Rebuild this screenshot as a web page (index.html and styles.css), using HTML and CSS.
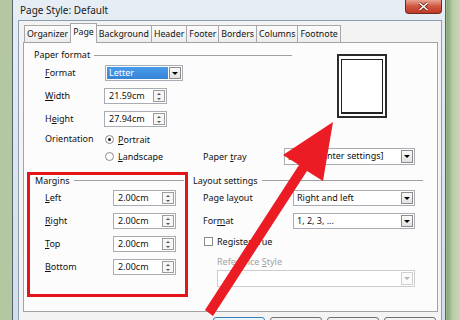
FILE: index.html
```html
<!DOCTYPE html>
<html lang="en">
<head>
  <meta charset="UTF-8" />
  <title>Page Style: Default</title>
  <link rel="stylesheet" href="styles.css">
</head>
<body>
  <div class="window">
    <div class="titlebar">
      <span class="title">Page Style: Default</span>
      <span class="close">
        <svg width="11" height="9" viewBox="0 0 11 9"><path d="M1.5 1 L9.5 8 M9.5 1 L1.5 8" stroke="#6b2118" stroke-width="3"/><path d="M1.5 1 L9.5 8 M9.5 1 L1.5 8" stroke="#fff" stroke-width="1.6"/></svg>
      </span>
    </div>

    <div class="client">
      <ul class="tabs">
        <li class="tab">Organizer</li>
        <li class="tab active">Page</li>
        <li class="tab">Background</li>
        <li class="tab">Header</li>
        <li class="tab">Footer</li>
        <li class="tab">Borders</li>
        <li class="tab">Columns</li>
        <li class="tab">Footnote</li>
      </ul>

      <div class="panel">
        <div class="paper">
          <div class="group-head paper-head">Paper format</div>
          <div class="preview"><div class="sheet"></div></div>

          <span class="lbl row-2"><u>F</u>ormat</span>
          <div class="combo format-combo row-2"><span class="val selected">Letter</span><span class="drop"></span></div>

          <span class="lbl row-3"><u>W</u>idth</span>
          <div class="spin row-3"><span class="val">21.59cm</span><span class="spinbtn"><i class="up"></i><i class="down"></i></span></div>

          <span class="lbl row-4">H<u>e</u>ight</span>
          <div class="spin row-4"><span class="val">27.94cm</span><span class="spinbtn"><i class="up"></i><i class="down"></i></span></div>

          <span class="lbl row-5">Orientation</span>
          <div class="radio-row row-5"><span class="radio on"></span><span><u>P</u>ortrait</span></div>

          <div class="radio-row landscape row-6"><span class="radio"></span><span><u>L</u>andscape</span></div>
          <span class="lbl tray-lbl row-6">Paper <u>t</u>ray</span>
          <div class="combo tray-combo row-6"><span class="val">[From printer settings]</span><span class="drop"></span></div>
        </div>

        <div class="lower">
          <div class="margins">
            <div class="group-head">Margins</div>
            <div class="fields margin-fields">
              <span class="lbl"><u>L</u>eft</span>
              <div class="spin"><span class="val">2.00cm</span><span class="spinbtn"><i class="up"></i><i class="down"></i></span></div>
              <span class="lbl"><u>R</u>ight</span>
              <div class="spin"><span class="val">2.00cm</span><span class="spinbtn"><i class="up"></i><i class="down"></i></span></div>
              <span class="lbl"><u>T</u>op</span>
              <div class="spin"><span class="val">2.00cm</span><span class="spinbtn"><i class="up"></i><i class="down"></i></span></div>
              <span class="lbl"><u>B</u>ottom</span>
              <div class="spin"><span class="val">2.00cm</span><span class="spinbtn"><i class="up"></i><i class="down"></i></span></div>
            </div>
          </div>

          <div class="layout">
            <div class="group-head">Layout settings</div>
            <div class="fields layout-fields">
              <span class="lbl">Page la<u>y</u>out</span>
              <div class="combo"><span class="val">Right and left</span><span class="drop"></span></div>
              <span class="lbl">For<u>m</u>at</span>
              <div class="combo"><span class="val">1, 2, 3, ...</span><span class="drop"></span></div>
            </div>
            <div class="check-row"><span class="checkbox"></span><span>Register-true</span></div>
            <div class="ref-lbl">Reference <u>S</u>tyle</div>
            <div class="combo disabled"><span class="val"></span><span class="drop"></span></div>
          </div>
        </div>
      </div>

      <!-- only the top edge of the dialog buttons is in the shot -->
      <div class="buttons">
        <button class="btn default" aria-label="OK"></button>
        <button class="btn" aria-label="Cancel"></button>
        <button class="btn" aria-label="Help"></button>
        <button class="btn" aria-label="Reset"></button>
      </div>
    </div>
  </div>

  <svg class="arrow" width="460" height="320" viewBox="0 0 460 320">
    <polygon points="333,122 323,181 307,171 213,316 205,310 299,165 283,155" fill="#ec1c24"/>
  </svg>
</body>
</html>
```

FILE: styles.css
```css
* {
  box-sizing: border-box;
}

body {
  margin: 0;
  width: 460px;
  height: 320px;
  overflow: hidden;
  position: relative;
  background: linear-gradient(90deg, #b3c8a1 0, #b3c8a1 446px, #86a574 447px, #b9cda8 453px, #c6d6b6 460px);
  font-family: "Noto Sans", "Open Sans", sans-serif;
  font-size: 9px;
  color: #111;
}

u {
  text-decoration: underline;
  text-underline-offset: 1px;
}

.window {
  margin-left: 12px;
  width: 434px;
  height: 320px;
  border-left: 1px solid #56646f;
  border-right: 1px solid #56646f;
  padding: 0 3px 0 5px;
  background: linear-gradient(#e6edf4, #d2deea);
}

.titlebar {
  height: 20px;
  display: flex;
  align-items: flex-start;
}

.title {
  padding: 4px 0 0 2px;
  font-size: 10px;
  line-height: 12px;
  color: #1a1a1a;
}

.close {
  margin-left: auto;
  width: 37px;
  height: 14px;
  display: flex;
  align-items: center;
  justify-content: center;
  border: 1px solid #6e2a22;
  border-top: none;
  border-radius: 0 0 4px 4px;
  background: linear-gradient(#e8a493, #d0553f 50%, #bd3a24);
}

.client {
  height: 300px;
  overflow: hidden;
  background: #f3f3f3;
  border: 1px solid #8e9dac;
  border-bottom: none;
  padding: 4px 3px 0 4px;
}

/* tab strip */
.tabs {
  list-style: none;
  margin: 0 0 0 1px;
  padding: 0;
  height: 17px;
  display: flex;
  align-items: flex-end;
  font-size: 8.8px;
}

.tab {
  height: 17px;
  padding: 0 2px;
  line-height: 16px;
  border: 1px solid #a7a7a7;
  border-bottom: none;
  margin-right: -1px;
  background: linear-gradient(#fbfbfb, #ececec);
  white-space: nowrap;
}

.tab.active {
  height: 20px;
  margin-bottom: -1px;
  line-height: 17px;
  position: relative;
  z-index: 1;
  background: #fcfcfc;
}

.panel {
  height: 270px;
  border: 1px solid #a3a3a3;
  background: #fcfcfc;
  padding: 6px 0 0 10px;
}

.group-head {
  display: flex;
  align-items: center;
  height: 11px;
  line-height: 11px;
  white-space: nowrap;
}

.group-head::after {
  content: "";
  flex: 1;
  margin-left: 4px;
  border-top: 1px solid #a0a0a0;
}

/* paper format */
.paper {
  display: grid;
  grid-template-columns: 70px 99px 81px 131px;
  grid-template-rows: 16px 23px 23px 20px 17px 17px;
  align-items: start;
}

.paper > .lbl {
  grid-column: 1;
}

.paper > .combo,
.paper > .spin,
.paper > .radio-row {
  grid-column: 2;
}

.row-2 { grid-row: 2; }
.row-3 { grid-row: 3; }
.row-4 { grid-row: 4; }
.row-5 { grid-row: 5; }
.row-6 { grid-row: 6; }

.paper-head {
  grid-column: 1 / 5;
  grid-row: 1;
  width: 258px;
  height: 12px;
  line-height: 12px;
}

.preview {
  grid-column: 4;
  grid-row: 1 / 5;
  width: 50px;
  height: 64px;
  margin: 5px 0 0 53px;
  border: 2px solid #2b2b2b;
  background: #fff;
  padding: 3px 2px 2px 2px;
}

.sheet {
  height: 100%;
  border: 1px solid #222;
  border-bottom-width: 2px;
}

.lbl {
  padding-left: 11px;
  line-height: 16px;
  white-space: nowrap;
}

.combo,
.spin {
  display: flex;
  height: 16px;
  padding: 1px;
  border: 1px solid #a9acb2;
  background: #fff;
}

.combo .val,
.spin .val {
  flex: 1;
  padding-left: 2px;
  line-height: 12px;
  white-space: nowrap;
  overflow: hidden;
}

.spin .val {
  padding-left: 3px;
}

.combo .drop {
  width: 12px;
  display: flex;
  align-items: center;
  justify-content: center;
  border: 1px solid #8c8c8c;
  background: linear-gradient(#fafafa, #e1e1e1);
}

.combo .drop::before {
  content: "";
  border-left: 3px solid transparent;
  border-right: 3px solid transparent;
  border-top: 3px solid #000;
}

.format-combo {
  width: 78px;
  margin-left: 1px;
}

.val.selected {
  margin-right: 1px;
  background: linear-gradient(#4a9bec, #3483d6);
  color: #fff;
}

.spin {
  width: 63px;
}

.spinbtn {
  width: 12px;
  display: flex;
  flex-direction: column;
  align-items: center;
  justify-content: space-around;
  border: 1px solid #9c9c9c;
  background: #f6f6f6;
}

.spinbtn i {
  width: 0;
  height: 0;
  border-left: 2px solid transparent;
  border-right: 2px solid transparent;
}

.spinbtn .up {
  border-bottom: 2px solid #555;
}

.spinbtn .down {
  border-top: 2px solid #555;
}

.radio-row {
  display: flex;
  align-items: center;
  gap: 4px;
  height: 16px;
  margin-left: 1px;
}

.radio-row.landscape {
  height: 17px;
}

.radio {
  width: 9px;
  height: 9px;
  border: 1px solid #8a8a8a;
  border-radius: 50%;
  background: #fff;
  display: flex;
  align-items: center;
  justify-content: center;
}

.radio.on::after {
  content: "";
  width: 3px;
  height: 3px;
  border-radius: 50%;
  background: #1a1a1a;
}

.paper > .tray-lbl {
  grid-column: 3;
  padding-left: 0;
  line-height: 17px;
}

.paper > .tray-combo {
  grid-column: 4;
  height: 17px;
}

/* margins and layout */
.lower {
  display: flex;
  align-items: flex-start;
}

.margins {
  width: 161px;
  height: 125px;
  margin: 7px 0 0 -7px;
  border: 3px solid #e3151b;
  padding: 0 1px 0 5px;
}

.fields {
  display: grid;
  grid-auto-rows: 16px;
  row-gap: 7px;
  margin-top: 4px;
}

.margin-fields {
  grid-template-columns: 78px 62px;
}

.margin-fields .lbl {
  padding-left: 10px;
}

.layout {
  width: 230px;
  margin: 10px 0 0 5px;
}

.layout-fields {
  grid-template-columns: 100px 122px;
}

.layout-fields .lbl {
  padding-left: 10px;
}

.check-row {
  display: flex;
  align-items: center;
  gap: 4px;
  height: 16px;
  margin-top: 4px;
  padding-left: 11px;
}

.checkbox {
  width: 9px;
  height: 9px;
  border: 1px solid #8a8a8a;
  background: #fff;
}

.ref-lbl {
  margin-top: 7px;
  padding-left: 24px;
  line-height: 12px;
  color: #a3a3a3;
}

.combo.disabled {
  width: 198px;
  height: 17px;
  margin: 2px 0 0 24px;
  border-color: #cdcdcd;
}

.combo.disabled .drop {
  border-color: #d0d0d0;
  background: #fafafa;
}

.combo.disabled .drop::before {
  border-top-color: #b5b5b5;
}

/* dialog buttons */
.buttons {
  display: flex;
  justify-content: flex-end;
  gap: 5px;
  margin: 5px 2px 0 0;
}

.btn {
  width: 52px;
  height: 23px;
  border: 1px solid #707070;
  border-radius: 3px;
  background: linear-gradient(#f3f3f3, #dcdcdc);
  font: inherit;
}

.btn.default {
  border-color: #3c7fb1;
  background: linear-gradient(#eaf6fd, #bee6fd);
}

.arrow {
  position: absolute;
  top: 0;
  left: 0;
  pointer-events: none;
}
```
